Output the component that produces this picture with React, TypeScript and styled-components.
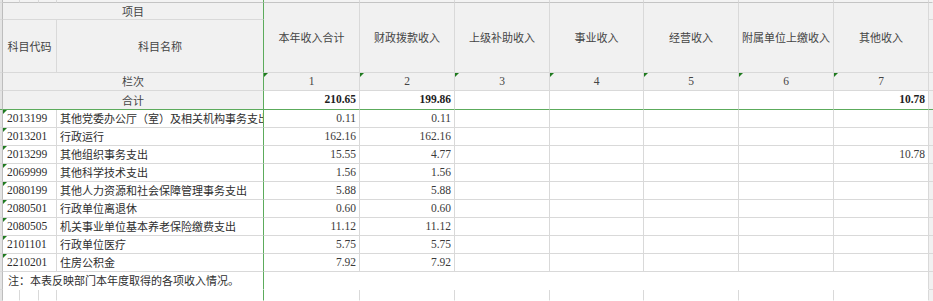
import React from "react";
import styled, { createGlobalStyle, css } from "styled-components";

const LINE = "#d9d9d9";
const GREEN = "#5cab5c";
const TRI = "#1f7a1f";
const HEAD_BG = "#f1f1f1";
const CJK = `"Noto Sans CJK SC", "Noto Sans", sans-serif`;
const NUM = `"Liberation Serif", "Noto Sans CJK SC", serif`;

const GlobalStyle = createGlobalStyle`
  html, body { margin: 0; padding: 0; background: #ffffff; }
  body { font-family: ${CJK}; }
`;

const Sheet = styled.div`
  display: grid;
  grid-template-columns: 3px 17px 19px 18px 207px 96px 95px 95px 94px 95px 95px 95px 4px;
  grid-template-rows: 3px 17px 53px 18px 19px repeat(9, 18px) 18px 11px;
  width: 933px;
  height: 301px;
  overflow: hidden;
  background: #ffffff;
`;

type CellProps = {
  $span?: number;
  $rows?: number;
  $greenR?: boolean;
  $greenB?: boolean;
  $noR?: boolean;
  $noB?: boolean;
  $flag?: boolean;
  $bg?: string;
};

const Cell = styled.div<CellProps>`
  position: relative;
  box-sizing: border-box;
  grid-column: span ${(p) => p.$span ?? 1};
  grid-row: span ${(p) => p.$rows ?? 1};
  border-right: 1px solid ${(p) => (p.$greenR ? GREEN : p.$noR ? "transparent" : LINE)};
  border-bottom: 1px solid ${(p) => (p.$greenB ? GREEN : p.$noB ? "transparent" : LINE)};
  background: ${(p) => p.$bg ?? "#ffffff"};
  overflow: hidden;
  white-space: nowrap;
  display: flex;
  align-items: center;
  font-size: 11px;
  line-height: 1;
  color: #3a3a3a;
  ${(p) =>
    p.$flag &&
    css`
      &::before {
        content: "";
        position: absolute;
        left: 0;
        top: 0;
        width: 0;
        height: 0;
        border-top: 4px solid ${TRI};
        border-right: 4px solid transparent;
      }
    `}
`;

const EdgeCell = styled(Cell)`
  background: #e4e4e4;
  border-right: 1px solid #bdbdbd;
`;

const TopStrip = styled(Cell)`
  background: #f3f3f3;
  border-bottom: 1px solid #c4c4c4;
`;

const RightEdge = styled(Cell)`
  background: ${HEAD_BG};
  border-right: none;
`;

const HeadCell = styled(Cell)`
  background: ${HEAD_BG};
  justify-content: center;
  font-family: ${CJK};
  color: #444444;
`;

const SerialCell = styled(Cell)`
  background: ${HEAD_BG};
  justify-content: center;
  font-family: ${NUM};
  font-size: 11.5px;
  color: #444444;
`;

const ValueCell = styled(Cell)<{ $bold?: boolean }>`
  justify-content: flex-end;
  padding-right: 3px;
  font-family: ${NUM};
  font-size: 11.5px;
  font-weight: ${(p) => (p.$bold ? 700 : 400)};
  color: ${(p) => (p.$bold ? "#1e1e1e" : "#3a3a3a")};
`;

const CodeCell = styled(Cell)`
  padding-left: 4px;
  font-family: ${NUM};
  font-size: 11.5px;
  color: #2e2e2e;
`;

const NameCell = styled(Cell)`
  padding-left: 3px;
  font-family: ${CJK};
  color: #2e2e2e;
`;

const NoteCell = styled(Cell)`
  padding-left: 5px;
  font-family: ${CJK};
  color: #2e2e2e;
  overflow: visible;
`;

const headers = ["本年收入合计", "财政拨款收入", "上级补助收入", "事业收入", "经营收入", "附属单位上缴收入", "其他收入"];

type Row = { code: string; name: string; total: string; fiscal: string; other?: string };

const rows: Row[] = [
  { code: "2013199", name: "其他党委办公厅（室）及相关机构事务支出", total: "0.11", fiscal: "0.11" },
  { code: "2013201", name: "行政运行", total: "162.16", fiscal: "162.16" },
  { code: "2013299", name: "其他组织事务支出", total: "15.55", fiscal: "4.77", other: "10.78" },
  { code: "2069999", name: "其他科学技术支出", total: "1.56", fiscal: "1.56" },
  { code: "2080199", name: "其他人力资源和社会保障管理事务支出", total: "5.88", fiscal: "5.88" },
  { code: "2080501", name: "行政单位离退休", total: "0.60", fiscal: "0.60" },
  { code: "2080505", name: "机关事业单位基本养老保险缴费支出", total: "11.12", fiscal: "11.12" },
  { code: "2101101", name: "行政单位医疗", total: "5.75", fiscal: "5.75" },
  { code: "2210201", name: "住房公积金", total: "7.92", fiscal: "7.92" },
];

export default function App() {
  return (
    <>
      <GlobalStyle />
      <Sheet>
        {/* top strip */}
        <EdgeCell />
        <TopStrip />
        <TopStrip />
        <TopStrip />
        <TopStrip $greenR />
        {Array.from({ length: 7 }).map((_, i) => (
          <TopStrip key={`ts${i}`} />
        ))}
        <TopStrip $noR />

        {/* 项目 row */}
        <EdgeCell />
        <HeadCell $span={4} $greenR>项目</HeadCell>
        {headers.map((h) => (
          <HeadCell key={h} $rows={2}>
            {h}
          </HeadCell>
        ))}
        <RightEdge />

        {/* 科目 row */}
        <EdgeCell />
        <HeadCell $span={3}>科目代码</HeadCell>
        <HeadCell $greenR>科目名称</HeadCell>
        <RightEdge />

        {/* 栏次 row */}
        <EdgeCell />
        <HeadCell $span={4} $greenR>栏次</HeadCell>
        {headers.map((_, i) => (
          <SerialCell key={`s${i}`} $flag>
            {i + 1}
          </SerialCell>
        ))}
        <RightEdge />

        {/* 合计 row */}
        <EdgeCell $greenB />
        <HeadCell $span={4} $greenR $greenB>合计</HeadCell>
        <ValueCell $bold $greenB>210.65</ValueCell>
        <ValueCell $bold $greenB>199.86</ValueCell>
        <ValueCell $greenB />
        <ValueCell $greenB />
        <ValueCell $greenB />
        <ValueCell $greenB />
        <ValueCell $bold $greenB>10.78</ValueCell>
        <RightEdge $greenB />

        {/* data rows */}
        {rows.map((r) => (
          <React.Fragment key={r.code}>
            <EdgeCell />
            <CodeCell $span={3} $flag>
              {r.code}
            </CodeCell>
            <NameCell $greenR>{r.name}</NameCell>
            <ValueCell>{r.total}</ValueCell>
            <ValueCell>{r.fiscal}</ValueCell>
            <ValueCell />
            <ValueCell />
            <ValueCell />
            <ValueCell />
            <ValueCell>{r.other ?? ""}</ValueCell>
            <RightEdge $bg="#ffffff" />
          </React.Fragment>
        ))}

        {/* note row */}
        <EdgeCell />
        <NoteCell $span={4} $greenR $noB>
          注：本表反映部门本年度取得的各项收入情况。
        </NoteCell>
        <Cell $span={7} $noB />
        <RightEdge $bg="#ffffff" />

        {/* trailing row */}
        <EdgeCell $noB />
        <Cell $noB />
        <Cell $noB />
        <Cell $noB />
        <Cell $greenR $noB />
        {Array.from({ length: 7 }).map((_, i) => (
          <Cell key={`b${i}`} $noB />
        ))}
        <RightEdge $bg="#ffffff" $noB />
      </Sheet>
    </>
  );
}
